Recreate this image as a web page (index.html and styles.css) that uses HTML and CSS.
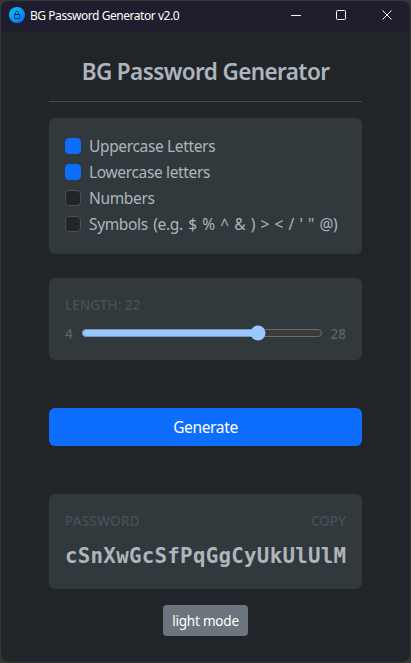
FILE: index.html
```
<!DOCTYPE html>
<html lang="en">
<head>
<meta charset="utf-8">
<title>BG Password Generator v2.0</title>
<link rel="stylesheet" href="styles.css">
</head>
<body>
<div class="window">
  <header class="titlebar">
    <svg class="app-icon" viewBox="0 0 16 16" width="16" height="16">
      <defs><linearGradient id="g" x1="0" y1="0" x2="1" y2="1"><stop offset="0" stop-color="#08c8ff"/><stop offset="1" stop-color="#086af4"/></linearGradient></defs>
      <circle cx="8" cy="8" r="8" fill="url(#g)"/>
      <path d="M5.5 7.5h5v4h-5zM6.5 7.5V5.4L8 4l1.5 1.4v2.1" fill="none" stroke="#0b2f55"/>
    </svg>
    <span class="app-name">BG Password Generator v2.0</span>
    <svg class="controls" viewBox="0 0 104 12" width="104" height="12" fill="none" stroke="#fff">
      <path d="M0 6.5h10"/>
      <rect x="45.5" y="1.5" width="9" height="9" rx="1"/>
      <path d="M91.5 1.5l9 9M100.5 1.5l-9 9"/>
    </svg>
  </header>
  <main class="content">
    <h1 class="heading">BG Password Generator</h1>
    <section class="card options">
      <label class="option"><i class="box checked"></i><span>Uppercase Letters</span></label>
      <label class="option"><i class="box checked"></i><span>Lowercase letters</span></label>
      <label class="option"><i class="box"></i><span>Numbers</span></label>
      <label class="option"><i class="box"></i><span class="symbols">Symbols (e.g. $ % ^ &amp; ) &gt; &lt; / ' " @)</span></label>
    </section>
    <section class="card length">
      <div class="caption"><span>LENGTH: 22</span></div>
      <div class="range">
        <span>4</span>
        <svg class="slider" viewBox="0 0 240 16" width="240" height="16">
          <rect x=".5" y="4.5" width="239" height="7" rx="3.5" fill="#3b3b3b" stroke="#6b6b6b"/>
          <rect x=".5" y="4.5" width="176" height="7" rx="3.5" fill="#99c8ff" stroke="#7798bd"/>
          <circle cx="176" cy="8" r="7.5" fill="#99c8ff"/>
        </svg>
        <span>28</span>
      </div>
    </section>
    <button class="generate">Generate</button>
    <section class="card result">
      <div class="caption"><span class="pass">PASSWORD</span><span>COPY</span></div>
      <div class="password">cSnXwGcSfPqGgCyUkUlUlM</div>
    </section>
    <button class="mode">light mode</button>
  </main>
</div>
</body>
</html>
```

FILE: styles.css
```
* { box-sizing: border-box; }
body {
  margin: 0;
  width: 411px;
  height: 663px;
  padding: 1px;
  overflow: hidden;
  background: #343837;
  color: #adb5bd;
  font-family: "Noto Sans", "Open Sans", sans-serif;
}
.window {
  height: 661px;
  width: 409px;
  border-radius: 8px;
  overflow: hidden;
  background: #212529;
}
.titlebar {
  height: 30px;
  display: flex;
  align-items: center;
  padding: 0 15px 2px 8px;
  background: #1f1d2e;
}
.app-name {
  margin-left: 5px;
  color: #fff;
  font-size: 12px;
  letter-spacing: -0.45px;
  white-space: nowrap;
}
.controls { margin-left: auto; flex: none; }
.content {
  display: flex;
  flex-direction: column;
  padding: 24px 48px 0;
}
.heading {
  margin: 0 0 16px;
  height: 47px;
  padding-top: 3px;
  border-bottom: 1px solid #46494d;
  text-align: center;
  font-size: 22.5px;
  line-height: 28px;
  font-weight: 600;
  letter-spacing: -0.6px;
  white-space: nowrap;
}
.card {
  border-radius: 6px;
  background: #32393c;
  padding: 16px;
}
.options { height: 136px; padding-top: 15px; }
.option {
  display: flex;
  align-items: center;
  height: 26px;
  font-size: 15.5px;
  letter-spacing: -0.35px;
  white-space: nowrap;
}
.symbols { word-spacing: 1.8px; }
.box {
  width: 16px;
  height: 16px;
  margin-right: 8px;
  border: 1px solid #495057;
  border-radius: 4px;
  background: #212529;
}
.checked { background: #0d6efd; border-color: #0d6efd; }
.length { margin-top: 24px; height: 82px; }
.caption {
  display: flex;
  justify-content: space-between;
  height: 21px;
  line-height: 22px;
  font-size: 13.5px;
  font-weight: 500;
  color: #495057;
}
.pass { letter-spacing: 0.25px; }
.range {
  display: flex;
  align-items: center;
  height: 21px;
  margin-top: 8px;
  color: #5c636a;
  font-size: 13.5px;
  font-weight: 500;
}
.slider { flex: none; margin: 0 auto 2px 9px; }
button {
  border: 0;
  padding: 0;
  color: #fff;
  font-family: inherit;
}
.generate {
  margin-top: 48px;
  height: 38px;
  border-radius: 6px;
  background: #0d6efd;
  font-size: 15.5px;
  letter-spacing: -0.35px;
}
.result { margin-top: 48px; height: 95px; }
.password {
  margin-top: 10px;
  font: bold 20.8px/30px "DejaVu Sans Mono", monospace;
  letter-spacing: 0.27px;
  white-space: nowrap;
}
.mode {
  align-self: center;
  width: 85px;
  height: 31px;
  margin-top: 16px;
  border-radius: 4px;
  background: #6c757d;
  font-size: 13.5px;
  letter-spacing: -0.2px;
}
```
